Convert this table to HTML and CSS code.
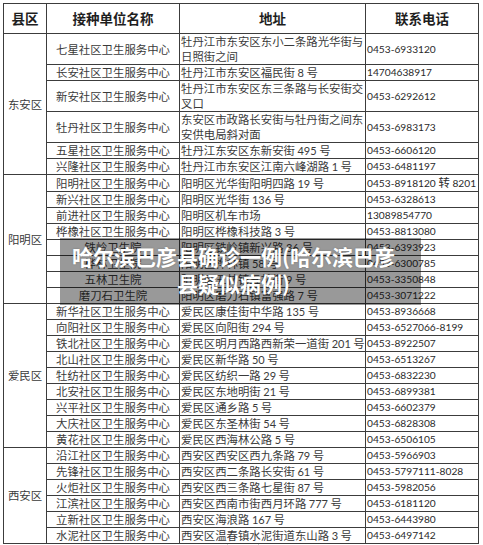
FILE: index.html
```html
<!DOCTYPE html>
<html lang="zh-CN">
<head>
<meta charset="utf-8">
<title>接种单位</title>
<link rel="stylesheet" href="styles.css">
</head>
<body>
<table class="sheet">
  <colgroup>
    <col class="c-district"><col class="c-name"><col class="c-addr"><col class="c-tel">
  </colgroup>
  <thead>
    <tr><th>县区</th><th>接种单位名称</th><th>地址</th><th>联系电话</th></tr>
  </thead>
  <tbody>
    <tr><td class="district" rowspan="6">东安区</td><td class="name">七星社区卫生服务中心</td><td class="addr">牡丹江市东安区东小二条路光华街与<br>日照街之间</td><td class="tel">0453-6933120</td></tr>
    <tr><td class="name">长安社区卫生服务中心</td><td class="addr">牡丹江市东安区福民街 <span class="num">8</span> 号</td><td class="tel">14704638917</td></tr>
    <tr><td class="name">新安社区卫生服务中心</td><td class="addr">牡丹江市东安区东三条路与长安街交<br>叉口</td><td class="tel">0453-6292612</td></tr>
    <tr><td class="name">牡丹社区卫生服务中心</td><td class="addr">东安区市政路长安街与牡丹街之间东<br>安供电局斜对面</td><td class="tel">0453-6983173</td></tr>
    <tr><td class="name">五星社区卫生服务中心</td><td class="addr">牡丹江东安区东新安街 <span class="num">495</span> 号</td><td class="tel">0453-6606120</td></tr>
    <tr class="last"><td class="name">兴隆社区卫生服务中心</td><td class="addr">牡丹江市东安区江南六峰湖路 <span class="num">1</span> 号</td><td class="tel">0453-6481197</td></tr>

    <tr><td class="district" rowspan="8">阳明区</td><td class="name">阳明社区卫生服务中心</td><td class="addr">阳明区光华街阳明四路 <span class="num">19</span> 号</td><td class="tel">0453-8918120 <span class="cn">转</span> 8201</td></tr>
    <tr><td class="name">新兴社区卫生服务中心</td><td class="addr">阳明区光华街 <span class="num">136</span> 号</td><td class="tel">0453-6328613</td></tr>
    <tr><td class="name">前进社区卫生服务中心</td><td class="addr">阳明区机车市场</td><td class="tel">13089854770</td></tr>
    <tr><td class="name">桦橡社区卫生服务中心</td><td class="addr">阳明区桦橡科技路 <span class="num">3</span> 号</td><td class="tel">0453-8813080</td></tr>
    <tr><td class="name">铁岭卫生院</td><td class="addr">阳明区铁岭镇新兴路 <span class="num">36</span> 号</td><td class="tel">0453-6393923</td></tr>
    <tr><td class="name">桦林卫生院</td><td class="addr">阳明区桦林镇 <span class="num">58</span> 号</td><td class="tel">0453-6300785</td></tr>
    <tr><td class="name">五林卫生院</td><td class="addr">阳明区五林镇五林街 <span class="num">9</span> 号</td><td class="tel">0453-3350848</td></tr>
    <tr><td class="name">磨刀石卫生院</td><td class="addr">阳明区磨刀石镇富强路 <span class="num">7</span> 号</td><td class="tel">0453-3071222</td></tr>

    <tr><td class="district" rowspan="9">爱民区</td><td class="name">新华社区卫生服务中心</td><td class="addr">爱民区康佳街中华路 <span class="num">135</span> 号</td><td class="tel">0453-8936668</td></tr>
    <tr><td class="name">向阳社区卫生服务中心</td><td class="addr">爱民区向阳街 <span class="num">294</span> 号</td><td class="tel">0453-6527066-8199</td></tr>
    <tr><td class="name">铁北社区卫生服务中心</td><td class="addr">爱民区明月西路西新荣一道街 <span class="num">201</span> 号</td><td class="tel">0453-8922507</td></tr>
    <tr><td class="name">北山社区卫生服务中心</td><td class="addr">爱民区新华路 <span class="num">50</span> 号</td><td class="tel">0453-6513267</td></tr>
    <tr><td class="name">牡纺社区卫生服务中心</td><td class="addr">爱民区纺织一路 <span class="num">29</span> 号</td><td class="tel">0453-6832230</td></tr>
    <tr><td class="name">北安社区卫生服务中心</td><td class="addr">爱民区东地明街 <span class="num">21</span> 号</td><td class="tel">0453-6899381</td></tr>
    <tr><td class="name">兴平社区卫生服务中心</td><td class="addr">爱民区通乡路 <span class="num">5</span> 号</td><td class="tel">0453-6602379</td></tr>
    <tr><td class="name">大庆社区卫生服务中心</td><td class="addr">爱民区东圣林街 <span class="num">54</span> 号</td><td class="tel">0453-6828308</td></tr>
    <tr><td class="name">黄花社区卫生服务中心</td><td class="addr">爱民区西海林公路 <span class="num">5</span> 号</td><td class="tel">0453-6506105</td></tr>

    <tr><td class="district" rowspan="6">西安区</td><td class="name">沿江社区卫生服务中心</td><td class="addr">西安区西安区西九条路 <span class="num">79</span> 号</td><td class="tel">0453-5966903</td></tr>
    <tr><td class="name">先锋社区卫生服务中心</td><td class="addr">西安区西二条路长安街 <span class="num">61</span> 号</td><td class="tel">0453-5797111-8028</td></tr>
    <tr><td class="name">火炬社区卫生服务中心</td><td class="addr">西安区西三条路七星街 <span class="num">87</span> 号</td><td class="tel">0453-5982056</td></tr>
    <tr><td class="name">江滨社区卫生服务中心</td><td class="addr">西安区西南市街西月环路 <span class="num">777</span> 号</td><td class="tel">0453-6181120</td></tr>
    <tr><td class="name">立新社区卫生服务中心</td><td class="addr">西安区海浪路 <span class="num">167</span> 号</td><td class="tel">0453-6443980</td></tr>
    <tr><td class="name">水泥社区卫生服务中心</td><td class="addr">西安区温春镇水泥街道东山路 <span class="num">3</span> 号</td><td class="tel">0453-6497142</td></tr>
  </tbody>
</table>
<div class="tail"></div>
<h1 class="caption">哈尔滨巴彦县确诊一例(哈尔滨巴彦<br>县疑似病例)</h1>
</body>
</html>
```

FILE: styles.css
```css
html, body {
  margin: 0;
  padding: 0;
  background: #ffffff;
}
body {
  position: relative;
  width: 483px;
  height: 545px;
  overflow: hidden;
  font-family: "Noto Sans CJK SC", sans-serif;
  color: #333333;
}
.sheet {
  border-collapse: collapse;
  table-layout: fixed;
  margin: 3px 0 0 3px;
  width: 475px;
}
.c-district { width: 43px; }
.c-name { width: 133px; }
.c-addr { width: 186px; }
.c-tel { width: 113px; }

.sheet th,
.sheet td {
  border: 1px solid #3c3c3c;
  padding: 0;
  white-space: nowrap;
  overflow: hidden;
}
.sheet th {
  height: 29px;
  line-height: 29px;
  font-size: 13.5px;
  font-weight: 700;
  color: #1e1e1e;
  text-align: center;
}
.sheet td {
  line-height: 15px;
  height: 15px;
  font-size: 11.4px;
  font-weight: 400;
  color: #3a3a3a;
  vertical-align: middle;
}
.district {
  text-align: center;
  font-size: 12px;
}
.name {
  text-align: center;
}
.addr {
  text-align: left;
  padding-left: 1px !important;
}
.num {
  font-family: Lato, "Noto Sans CJK SC", sans-serif;
  font-size: 11px;
  font-weight: 400;
}
.tel {
  text-align: left;
  padding-left: 1px !important;
  font-family: Lato, "Noto Sans CJK SC", sans-serif;
  font-size: 10.2px !important;
  color: #2a2a2a !important;
}
.tel .cn {
  font-family: "Noto Sans CJK SC", sans-serif;
  font-size: 11.4px;
}
.tail {
  margin-left: 227px;
  width: 30px;
  height: 3px;
  border-left: 1px solid #cfcfcf;
  border-right: 1px solid #cfcfcf;
}
.caption {
  position: absolute;
  left: 60px;
  top: 238px;
  width: 361px;
  height: 67px;
  box-sizing: border-box;
  margin: 0;
  padding: 5px 14px 0 0;
  background: rgba(0, 0, 0, 0.4);
  color: #ffffff;
  font-family: "Noto Sans CJK SC", sans-serif;
  font-size: 21px;
  font-weight: 700;
  line-height: 27px;
  text-align: center;
  white-space: nowrap;
  text-shadow: 0 0 2px rgba(0, 0, 0, 0.25);
}
```
